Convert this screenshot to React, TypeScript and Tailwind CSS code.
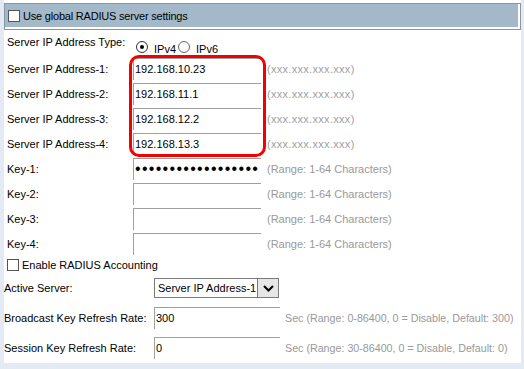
import React from "react";

const ipRows = [
  ["Server IP Address-1:", "192.168.10.23"],
  ["Server IP Address-2:", "192.168.11.1"],
  ["Server IP Address-3:", "192.168.12.2"],
  ["Server IP Address-4:", "192.168.13.3"],
];

function Box() {
  return <div className="w-[12px] h-[12px] shrink-0 border border-[#555] bg-white" />;
}

function Field({ children, w = "w-[128px]" }: { children?: React.ReactNode; w?: string }) {
  return (
    <div
      className={`${w} h-[22px] shrink-0 border-t border-l border-t-[#a0a0a0] border-l-[#a0a0a0] bg-white pl-[1px] leading-[21px] whitespace-nowrap overflow-hidden`}
    >
      {children}
    </div>
  );
}

export default function App() {
  return (
    <div className="w-[524px] h-[369px] bg-[#e3eaf3] pl-[4px] font-['Liberation_Sans',Arial,sans-serif] text-[11px] text-black">
      <div className="relative w-[517px] h-[363px] bg-white">
        {/* header */}
        <div className="pt-[3px]">
          <div className="h-[27px] border border-[#8597a3] bg-white pr-[2px] pb-[2px]">
            <div className="h-full bg-[#a3b9c9] flex items-center pl-[3px]">
              <Box />
              <span className="ml-[3px] leading-[14px] tracking-[-0.2px]">Use global RADIUS server settings</span>
            </div>
          </div>
        </div>

        {/* type row */}
        <div className="flex h-[28px] items-start pl-[3px] whitespace-nowrap">
          <span className="w-[129px] mt-[5px] leading-[14px]">Server IP Address Type:</span>
          <div className="mt-[11px] w-[12px] h-[12px] rounded-full border border-[#333] flex items-center justify-center">
            <div className="w-[4px] h-[4px] rounded-full bg-black" />
          </div>
          <span className="ml-[6px] mt-[12px] leading-[14px]">IPv4</span>
          <div className="ml-[2px] mt-[11px] w-[12px] h-[12px] rounded-full border border-[#666]" />
          <span className="ml-[6px] mt-[12px] leading-[14px]">IPv6</span>
        </div>

        {ipRows.map(([l, v]) => (
          <div key={l} className="flex h-[25px] items-start pl-[3px] whitespace-nowrap">
            <span className="w-[126px] leading-[22px]">{l}</span>
            <Field>{v}</Field>
            <span className="ml-[6px] leading-[22px] text-[#a0a0a0] tracking-[0.3px]">(xxx.xxx.xxx.xxx)</span>
          </div>
        ))}

        {["Key-1:", "Key-2:", "Key-3:", "Key-4:"].map((l, i) => (
          <div key={l} className="flex h-[25px] items-start pl-[3px] whitespace-nowrap">
            <span className="w-[126px] leading-[22px]">{l}</span>
            <Field>
              {i === 0 ? (
                <span className="text-[16px] tracking-[1.3px] leading-[20px]">••••••••••••••••••</span>
              ) : null}
            </Field>
            <span className="ml-[6px] leading-[22px] text-[#999]">(Range: 1-64 Characters)</span>
          </div>
        ))}

        <div className="flex h-[12px] mt-[1px] items-center pl-[3px] whitespace-nowrap">
          <Box />
          <span className="ml-[3px] leading-[14px]">Enable RADIUS Accounting</span>
        </div>

        <div className="flex h-[20px] mt-[7px] items-center whitespace-nowrap">
          <span className="w-[150px] leading-[14px]">Active Server:</span>
          <div className="w-[125px] h-[20px] border border-[#7a7a7a] flex items-stretch">
            <span className="flex-1 pl-[3px] leading-[18px]">Server IP Address-1</span>
            <div className="w-[21px] border-l border-[#7a7a7a] bg-[#e6e6e6] flex items-center justify-center">
              <svg width="11" height="7" viewBox="0 0 11 7">
                <path d="M1 1 L5.5 5.5 L10 1" fill="none" stroke="#000" strokeWidth="2" />
              </svg>
            </div>
          </div>
        </div>

        <div className="flex h-[22px] mt-[9px] items-center whitespace-nowrap">
          <span className="w-[150px] leading-[14px]">Broadcast Key Refresh Rate:</span>
          <Field w="w-[126px]">300</Field>
          <span className="ml-[5px] leading-[14px] text-[#999] text-[10.7px]">Sec (Range: 0-86400, 0 = Disable, Default: 300)</span>
        </div>

        <div className="flex h-[22px] mt-[8px] items-center whitespace-nowrap">
          <span className="w-[150px] leading-[14px]">Session Key Refresh Rate:</span>
          <Field w="w-[126px]">0</Field>
          <span className="ml-[5px] leading-[14px] text-[#999] text-[10.7px]">Sec (Range: 30-86400, 0 = Disable, Default: 0)</span>
        </div>

        {/* red highlight annotation */}
        <div className="absolute left-[125px] top-[55px] w-[137px] h-[102px] border-[3px] border-[#f40000] rounded-[10px] pointer-events-none" />
      </div>
    </div>
  );
}
